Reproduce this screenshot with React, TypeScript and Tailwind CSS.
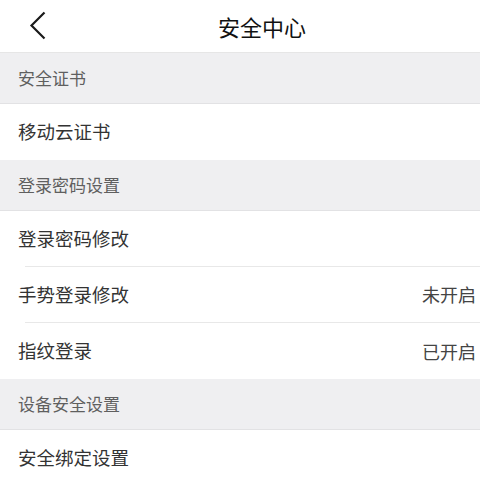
import React from "react";

const font = { fontFamily: '"Noto Sans CJK SC", "Noto Sans", sans-serif' };

type Item = { label: string; value?: string };
type Section = { title: string; items: Item[] };

const sections: Section[] = [
  { title: "安全证书", items: [{ label: "移动云证书" }] },
  {
    title: "登录密码设置",
    items: [
      { label: "登录密码修改" },
      { label: "手势登录修改", value: "未开启" },
      { label: "指纹登录", value: "已开启" },
    ],
  },
  { title: "设备安全设置", items: [{ label: "安全绑定设置" }] },
];

const App = () => {
  return (
    <div className="w-[480px] h-[480px] overflow-hidden bg-white" style={font}>
      <div className="relative h-[53px] flex items-center justify-center pl-[44px] border-b border-[#e6e6e6] bg-white">
        <svg
          className="absolute left-[29px] top-[11px]"
          width="18"
          height="29"
          viewBox="0 0 18 29"
          fill="none"
        >
          <path d="M15.5 1.5 L2.5 14.5 L15.5 27.5" stroke="#1a1a1a" strokeWidth="2.2" />
        </svg>
        <h1 className="text-[22px] text-[#111]">安全中心</h1>
      </div>

      {sections.map((section) => (
        <div key={section.title}>
          <div className="h-[51px] flex items-center px-[18px] bg-[#efeff1] border-b border-[#e2e2e4] text-[17px] text-[#5f5f5f]">
            {section.title}
          </div>
          {section.items.map((item, i) => (
            <div key={item.label} className="h-[56px] flex flex-col bg-white">
              <div className="flex-1 flex items-center justify-between pl-[18px] pr-[4px]">
                <span className="text-[18.5px] text-[#333]">{item.label}</span>
                {item.value && <span className="text-[18px] text-[#444]">{item.value}</span>}
              </div>
              {i < section.items.length - 1 && (
                <div className="ml-[25px] h-px bg-[#e8e8e8]" />
              )}
            </div>
          ))}
        </div>
      ))}
    </div>
  );
};

export default App;
